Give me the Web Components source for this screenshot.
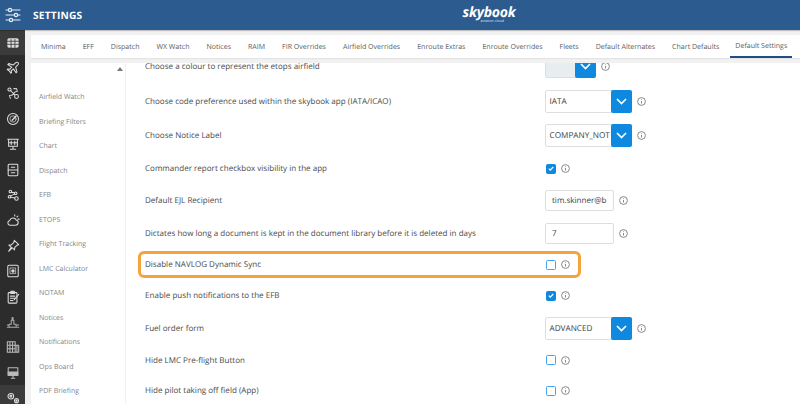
<!DOCTYPE html>
<html><head><meta charset="utf-8"><style>
html,body{margin:0;padding:0;width:800px;height:404px;overflow:hidden;background:#f1f1f1;font-family:"Open Sans",sans-serif;text-rendering:geometricPrecision}
</style></head><body>
<app-shell>
<span slot="tabs">
<nav-tab>Minima</nav-tab><nav-tab>EFF</nav-tab><nav-tab>Dispatch</nav-tab><nav-tab>WX Watch</nav-tab><nav-tab>Notices</nav-tab><nav-tab>RAIM</nav-tab><nav-tab>FIR Overrides</nav-tab><nav-tab>Airfield Overrides</nav-tab><nav-tab>Enroute Extras</nav-tab><nav-tab>Enroute Overrides</nav-tab><nav-tab>Fleets</nav-tab><nav-tab>Default Alternates</nav-tab><nav-tab>Chart Defaults</nav-tab><nav-tab active>Default Settings</nav-tab>
</span>
<span slot="side">
<side-item>Airfield Watch</side-item><side-item>Briefing Filters</side-item><side-item>Chart</side-item><side-item>Dispatch</side-item><side-item>EFB</side-item><side-item>ETOPS</side-item><side-item>Flight Tracking</side-item><side-item>LMC Calculator</side-item><side-item>NOTAM</side-item><side-item>Notices</side-item><side-item>Notifications</side-item><side-item>Ops Board</side-item><side-item>PDF Briefing</side-item>
</span>
<span slot="rows">
<setting-row h="35" label="Choose a colour to represent the etops airfield" kind="colour"></setting-row>
<setting-row h="35" label="Choose code preference used within the skybook app (IATA/ICAO)" kind="select" value="IATA"></setting-row>
<setting-row h="34" label="Choose Notice Label" kind="select" value="COMPANY_NOT"></setting-row>
<setting-row h="32" label="Commander report checkbox visibility in the app" kind="check" checked></setting-row>
<setting-row h="32" label="Default EJL Recipient" kind="input" value="tim.skinner@b"></setting-row>
<setting-row h="33" label="Dictates how long a document is kept in the document library before it is deleted in days" kind="input" value="7"></setting-row>
<setting-row h="30" label="Disable NAVLOG Dynamic Sync" kind="check" highlight></setting-row>
<setting-row h="32" label="Enable push notifications to the EFB" kind="check" checked></setting-row>
<setting-row h="33" label="Fuel order form" kind="select" value="ADVANCED"></setting-row>
<setting-row h="31" label="Hide LMC Pre-flight Button" kind="check"></setting-row>
<setting-row h="30" label="Hide pilot taking off field (App)" kind="check"></setting-row>
</span>
</app-shell>
<script>
const svg=(inner,sz=15)=>`<svg width="${sz}" height="${sz}" viewBox="0 0 16 16" fill="none" stroke="currentColor" stroke-width="1.2" stroke-linecap="round" stroke-linejoin="round">${inner}</svg>`;
const RAIL=[
['<rect x="1.5" y="2.5" width="13" height="11" rx="2" fill="currentColor" stroke="none"/><path stroke="#333" stroke-width=".9" d="M1.5 6h13M1.5 9.5h13M5.8 4v9.5M10.2 4v9.5"/>',1],
['<path d="M14 2c-1-1-2.500-.5-3.500.5L8.500 4.500 3 3 2 4l4.500 3-2.300 2.500-2-.4-.8.8 2.500 1.500L5.500 14l.8-.8-.4-2L8.500 9 11.500 13.500l1-1L11 7l2-2c1-1 1.700-2.200 1-3z"/>',0],
['<circle cx="4" cy="4" r="1.800"/><circle cx="12" cy="12" r="2.200"/><path d="M5.500 5.500 10 10M9 3h3l1 3-3 1-2 3-4 1 1 3" stroke-dasharray="1.600 1.100"/>',0],
['<circle cx="8" cy="8" r="6.300"/><circle cx="8" cy="8" r="3.600" stroke-width=".8"/><path stroke-width="1.600" d="M7 9.500 11.500 4.500"/>',0],
['<path d="M2 2.500h12M3 2.500v8h10v-8M8 10.500V14M5 14h6M3 6.500h10M6 4.500v4M10 4.500v4"/>',0],
['<rect x="2.500" y="1.500" width="11" height="13" rx="1"/><path d="M2.500 8h11M6 4.800h4M6 11.200h4"/>',0],
['<circle cx="5" cy="4" r="1.500"/><circle cx="11" cy="6" r="1.500"/><circle cx="4" cy="10" r="1.500"/><circle cx="12" cy="12" r="2"/><path d="M6 5l4 .5M5 9l5-2M5.500 10.500l4.500 1"/>',0],
['<path d="M4.500 14h6.500a3 3 0 0 0 .7-5.900A4 4 0 0 0 4.300 8.500 2.800 2.800 0 0 0 4.500 14zM10 2v1.300M13.500 3.500l-1 1M15 7h-1.300"/>',0],
['<path d="M9.500 1.500l5 5-2 .7-2.500 2.500-.3 2.800-2.500-2.500L3 14l3-4.500-2.700-2.500 2.800-.3 2.700-2.500z"/>',0],
['<rect x="2" y="1.500" width="12" height="13" rx="1.500"/><rect x="5" y="4.500" width="6" height="6.500" stroke-width=".8"/><circle cx="8" cy="8" r="1.300" fill="currentColor"/>',0],
['<rect x="2.500" y="3" width="10" height="12" rx="1"/><rect x="5.500" y="1.500" width="4" height="2.500" fill="currentColor"/><path d="M5 7h5M5 9.500h5M5 12h3M14.500 5l-5 6"/>',0],
['<path stroke="#aaa" d="M1.500 14h13M3.500 14v-3.500h2.500V6h1V3h1v3h1v4.500h2.500V14M1.500 11.500h2M12.500 11.500h2"/>',0],
['<path stroke="#bbb" d="M1.500 2h9v12h-9zM1.500 6h9M1.500 10h9M4.500 2v12M7.500 2v12M10.500 6h4v8h-4M12.500 6v8"/>',0],
['<path stroke="#bbb" d="M2.500 2h11v8.500h-11z"/><rect x="2.500" y="7" width="11" height="3.500" fill="#bbb" stroke="#bbb"/><path stroke="#bbb" d="M6 14h4M8 10.500V14"/>',0],
['<circle cx="5.500" cy="6" r="3.200"/><circle cx="5.500" cy="6" r="1"/><circle cx="12" cy="11" r="2.300"/><circle cx="12" cy="11" r=".7"/><path stroke-width="1.400" stroke-dasharray="1 1.500" d="M5.500 1.800v0M1.500 3.800v0"/>',1]
];
class AppShell extends HTMLElement{
constructor(){super();const s=this.attachShadow({mode:'open'});
s.innerHTML=`<style>
:host{display:grid;grid-template-columns:25px 1fr;grid-template-rows:30px 374px;width:800px;height:404px;overflow:hidden}
header{grid-column:1/3;background:#2b5b8f;display:grid;grid-template-columns:25px 1fr 1fr;align-items:center;color:#fff;box-shadow:0 1px 1px #0003;z-index:1}
.menu{display:flex;justify-content:center;color:#e8f2fb}
h1{margin:0 0 0 8px;font:700 10.200px/1 "Open Sans",sans-serif;letter-spacing:.2px;color:#fff}
.logo{position:relative;justify-self:start;align-self:start;margin:4.500px 0 0 50px;height:20px;color:#fff}
.brand{display:block;font:italic 700 14px/15px "Open Sans",sans-serif;letter-spacing:-.2px}
.sub{position:absolute;left:18px;top:15px;font:3.600px/4px "Open Sans",sans-serif;white-space:nowrap;color:#dfe9f4}
.rail{background:#2c2c2c;display:flex;flex-direction:column;color:#dcdcdc;overflow:hidden}
.ri{flex:0 0 25.400px;display:flex;align-items:center;justify-content:center}
.ri.on{background:#3b3b3b}
.body{background:#f1f1f1;padding:5px 0 0 6px;display:grid;grid-template-rows:23px 1fr;row-gap:5px;min-width:0;overflow:hidden}
.tabs{background:#fff;display:flex;padding-left:1.500px;box-shadow:0 1px 1px #0000000d;white-space:nowrap;overflow:hidden}
.low{display:grid;grid-template-columns:94px 1fr;column-gap:1px;min-height:0}
.side{background:#fff;position:relative;padding-top:23px;overflow:hidden}
.up{position:absolute;right:2px;top:4px;width:0;height:0;border:3px solid transparent;border-bottom:4px solid #777;border-top:0}
.main{background:#fff;overflow:hidden;padding-left:19px;min-width:0}
.list{margin-top:-14.500px;display:block}
</style>
<header><div class="menu">${svg('<path stroke-width="1.100" d="M1 3h14M1 8h14M1 13h14"/><circle cx="5" cy="3" r="1.600" fill="#2b5b8f"/><circle cx="11" cy="8" r="1.600" fill="#2b5b8f"/><circle cx="6" cy="13" r="1.600" fill="#2b5b8f"/>',16)}</div><h1>SETTINGS</h1>
<div class="logo"><span class="brand">skybook</span><span class="sub">aviation cloud</span></div></header>
<div class="rail">${RAIL.map(([p,on])=>`<div class="ri${on?' on':''}">${svg(p,14)}</div>`).join('')}</div>
<div class="body"><div class="tabs"><slot name="tabs"></slot></div>
<div class="low"><div class="side"><i class="up"></i><slot name="side"></slot></div>
<div class="main"><div class="list"><slot name="rows"></slot></div></div></div></div>`}}
class NavTab extends HTMLElement{constructor(){super();this.attachShadow({mode:'open'}).innerHTML=`<style>
:host{display:inline-block;height:23px;box-sizing:border-box;padding:0 6.400px;margin:0 2.100px;font:7.050px/24px "Open Sans",sans-serif;color:#5c5c5c;vertical-align:top}
:host([active]){border-bottom:2px solid #1e4f86;line-height:22px;margin:0 0 0 2.500px;padding:0 5px}
</style><slot></slot>`}}
class SideItem extends HTMLElement{constructor(){super();this.attachShadow({mode:'open'}).innerHTML=`<style>
:host{display:block;height:24.500px;padding-left:8px;font:7px/24.500px "Open Sans",sans-serif;color:#858585}
</style><slot></slot>`}}
class SettingRow extends HTMLElement{constructor(){super();const a=n=>this.getAttribute(n);const k=a('kind'),val=a('value')||'';
const info=`<svg class="i" width="9" height="9" viewBox="0 0 9 9" fill="none" stroke="#6c6c6c" stroke-width=".8"><circle cx="4.500" cy="4.500" r="3.900"/><path d="M4.500 4v2.500M4.500 2.400v.7"/></svg>`;
const btn=`<b class="btn"><svg width="11" height="7" viewBox="0 0 11 7" fill="none" stroke="#fff" stroke-width="1.700"><path d="M1 1l4.500 4.500L10 1"/></svg></b>`;
let c='';
if(k==='select')c=`<div class="sel"><span>${val}</span>${btn}</div>`;
if(k==='colour')c=`<div class="sel col"><span></span>${btn}</div>`;
if(k==='input')c=`<div class="inp"><span>${val}</span></div>`;
if(k==='check')c=`<div class="chk${this.hasAttribute('checked')?' on':''}">${this.hasAttribute('checked')?'<svg width="9" height="9" viewBox="0 0 9 9" fill="none" stroke="#fff" stroke-width="1.300"><path d="M2 4.700l1.700 1.600L7 2.800"/></svg>':''}</div>`;
this.attachShadow({mode:'open'}).innerHTML=`<style>
:host{display:grid;grid-template-columns:400px auto;align-items:center;height:${a('h')}px;position:relative;font:8.050px "Open Sans",sans-serif;color:#4a4a4a;white-space:nowrap}
.ctl{display:flex;align-items:center}
.sel{display:flex;width:87px;height:23px;box-sizing:border-box;border:1px solid #dedede;border-radius:2px;margin-right:5px;background:#fff;align-items:stretch;font-size:8.200px}
.sel span{flex:1;min-width:0;padding-left:3.500px;line-height:21px;color:#3d3d3d}
.sel.col{width:51px}.sel.col span{background:#e8eef0}
.btn{flex:0 0 21px;margin:-1px;background:#0f88e0;border-radius:2px;display:flex;align-items:center;justify-content:center}
.inp{width:69px;height:21px;box-sizing:border-box;border:1px solid #dedede;border-radius:2px;padding:0 6px;line-height:19px;margin-right:5px;color:#3d3d3d;background:#fff}
.inp span{display:block}
.chk{width:10px;height:10px;box-sizing:border-box;border:1.200px solid #4aa3e6;border-radius:1.500px;margin-left:1px;background:#fff;display:flex;align-items:center;justify-content:center;margin-right:5px}
.chk.on{background:#0f88e0;border-color:#0f88e0}
.hl{position:absolute;left:-7px;top:1px;width:437px;height:21px;border:3px solid #f5a33b;border-radius:6px;pointer-events:none}
</style><span>${a('label')}</span><div class="ctl">${c}${info}</div>${this.hasAttribute('highlight')?'<i class="hl"></i>':''}`}}
customElements.define('app-shell',AppShell);customElements.define('nav-tab',NavTab);customElements.define('side-item',SideItem);customElements.define('setting-row',SettingRow);
</script>
</body></html>
